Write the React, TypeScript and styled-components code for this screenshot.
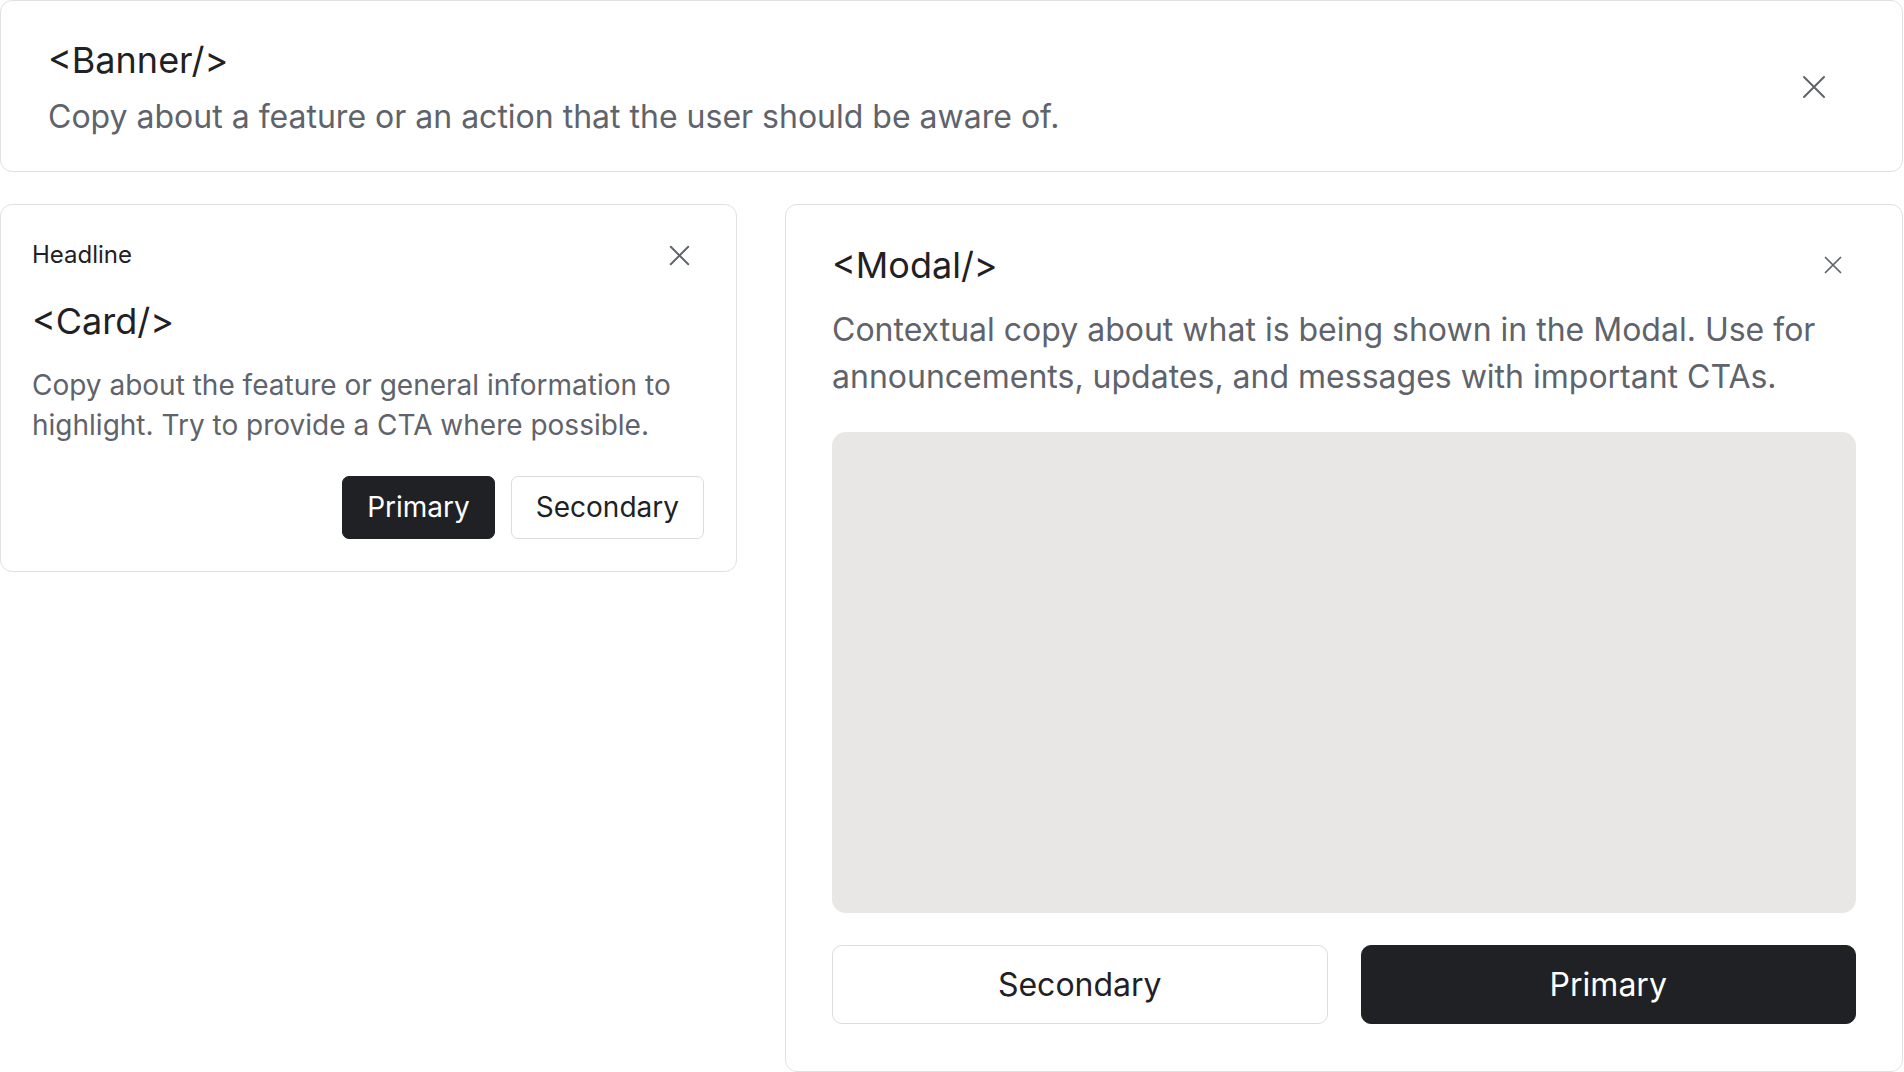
import React from "react";
import styled, { createGlobalStyle } from "styled-components";

const GlobalStyle = createGlobalStyle`
  html, body {
    margin: 0;
    padding: 0;
    background: #ffffff;
  }
  body {
    font-family: Inter, "Noto Sans", "Liberation Sans", sans-serif;
    color: #1f2125;
    -webkit-font-smoothing: antialiased;
  }
  * { box-sizing: border-box; }
`;

const Page = styled.div`
  width: 1903px;
  display: flex;
  flex-direction: column;
  gap: 32px;
`;

const Banner = styled.section`
  display: flex;
  align-items: center;
  justify-content: space-between;
  border: 1px solid #e1e1e5;
  border-radius: 12px;
  padding: 37px 48px 32px 47px;
`;

const TextStack = styled.div<{ $gap?: number }>`
  display: flex;
  flex-direction: column;
  gap: ${(p) => p.$gap ?? 0}px;
`;

const Title = styled.h2`
  margin: 0;
  font-size: 36px;
  line-height: 44px;
  font-weight: 400;
  color: #1f2125;
`;

const Copy = styled.p<{ $size: number; $line: number }>`
  margin: 0;
  font-size: ${(p) => p.$size}px;
  line-height: ${(p) => p.$line}px;
  font-weight: 400;
  color: #5f636b;
`;

const CloseButton = styled.button<{ $size: number; $offset?: number; $lift?: number }>`
  display: flex;
  align-items: center;
  justify-content: center;
  width: ${(p) => p.$size}px;
  height: ${(p) => p.$size}px;
  margin-right: ${(p) => p.$offset ?? 0}px;
  margin-bottom: ${(p) => (p.$lift ?? 0) * 2}px;
  padding: 0;
  border: none;
  background: transparent;
  color: #5f636b;
  cursor: pointer;
  flex-shrink: 0;
`;

const Row = styled.div`
  display: flex;
  align-items: flex-start;
  gap: 48px;
`;

const Card = styled.section`
  width: 737px;
  border: 1px solid #e1e1e5;
  border-radius: 12px;
  padding: 32px 32px 32px 31px;
  display: flex;
  flex-direction: column;
`;

const CardHeader = styled.div`
  display: flex;
  align-items: center;
  justify-content: space-between;
`;

const Headline = styled.span`
  font-size: 24px;
  line-height: 36px;
  color: #1f2125;
`;

const CardTitle = styled(Title)`
  margin-top: 26px;
`;

const CardCopy = styled(Copy)`
  margin-top: 22px;
`;

const Actions = styled.div`
  display: flex;
  justify-content: flex-end;
  gap: 16px;
  margin-top: 31px;
`;

const Button = styled.button<{ $variant: "primary" | "secondary"; $block?: boolean }>`
  font-family: inherit;
  font-size: ${(p) => (p.$block ? 32 : 28)}px;
  line-height: ${(p) => (p.$block ? 41 : 35)}px;
  font-weight: 400;
  border-radius: ${(p) => (p.$block ? 10 : 7)}px;
  padding: ${(p) => (p.$block ? "18px 24px" : "13px 24px")};
  border: 1px solid ${(p) => (p.$variant === "primary" ? "#1f2125" : "#dcdce0")};
  background: ${(p) => (p.$variant === "primary" ? "#1f2125" : "#ffffff")};
  color: ${(p) => (p.$variant === "primary" ? "#ffffff" : "#1f2125")};
  flex: ${(p) => (p.$block ? "1 1 0" : "0 0 auto")};
  cursor: pointer;
`;

const Modal = styled.section`
  flex: 1;
  height: 868px;
  border: 1px solid #e1e1e5;
  border-radius: 12px;
  padding: 38px 46px 47px 46px;
  display: flex;
  flex-direction: column;
`;

const ModalHeader = styled.div`
  display: flex;
  align-items: center;
  justify-content: space-between;
`;

const ModalCopy = styled(Copy)`
  margin-top: 19px;
`;

const Media = styled.div`
  margin-top: 32px;
  flex: 1;
  background: #e8e7e5;
  border-radius: 14px;
`;

const ModalActions = styled.div`
  display: flex;
  gap: 33px;
  margin-top: 32px;
`;

const XIcon = ({ size, stroke }: { size: number; stroke: number }) => (
  <svg width={size} height={size} viewBox="0 0 24 24" fill="none">
    <path
      d="M2 2L22 22M22 2L2 22"
      stroke="currentColor"
      strokeWidth={stroke}
      strokeLinecap="round"
    />
  </svg>
);

export default function App() {
  return (
    <>
      <GlobalStyle />
      <Page>
        <Banner>
          <TextStack $gap={13}>
            <Title>&lt;Banner/&gt;</Title>
            <Copy $size={32} $line={44}>
              Copy about a feature or an action that the user should be aware of.
            </Copy>
          </TextStack>
          <CloseButton $size={24} $offset={28} $lift={2} aria-label="Close">
            <XIcon size={24} stroke={2} />
          </CloseButton>
        </Banner>
        <Row>
          <Card>
            <CardHeader>
              <Headline>Headline</Headline>
              <CloseButton $size={21} $offset={14} aria-label="Close">
                <XIcon size={21} stroke={2.2} />
              </CloseButton>
            </CardHeader>
            <CardTitle>&lt;Card/&gt;</CardTitle>
            <CardCopy $size={28} $line={40}>
              Copy about the feature or general information to highlight. Try to provide a CTA where possible.
            </CardCopy>
            <Actions>
              <Button $variant="primary">Primary</Button>
              <Button $variant="secondary">Secondary</Button>
            </Actions>
          </Card>
          <Modal>
            <ModalHeader>
              <Title>&lt;Modal/&gt;</Title>
              <CloseButton $size={18} $offset={14} aria-label="Close">
                <XIcon size={18} stroke={2.3} />
              </CloseButton>
            </ModalHeader>
            <ModalCopy $size={32} $line={47}>
              Contextual copy about what is being shown in the Modal. Use for announcements, updates, and messages with important CTAs.
            </ModalCopy>
            <Media />
            <ModalActions>
              <Button $variant="secondary" $block>Secondary</Button>
              <Button $variant="primary" $block>Primary</Button>
            </ModalActions>
          </Modal>
        </Row>
      </Page>
    </>
  );
}
